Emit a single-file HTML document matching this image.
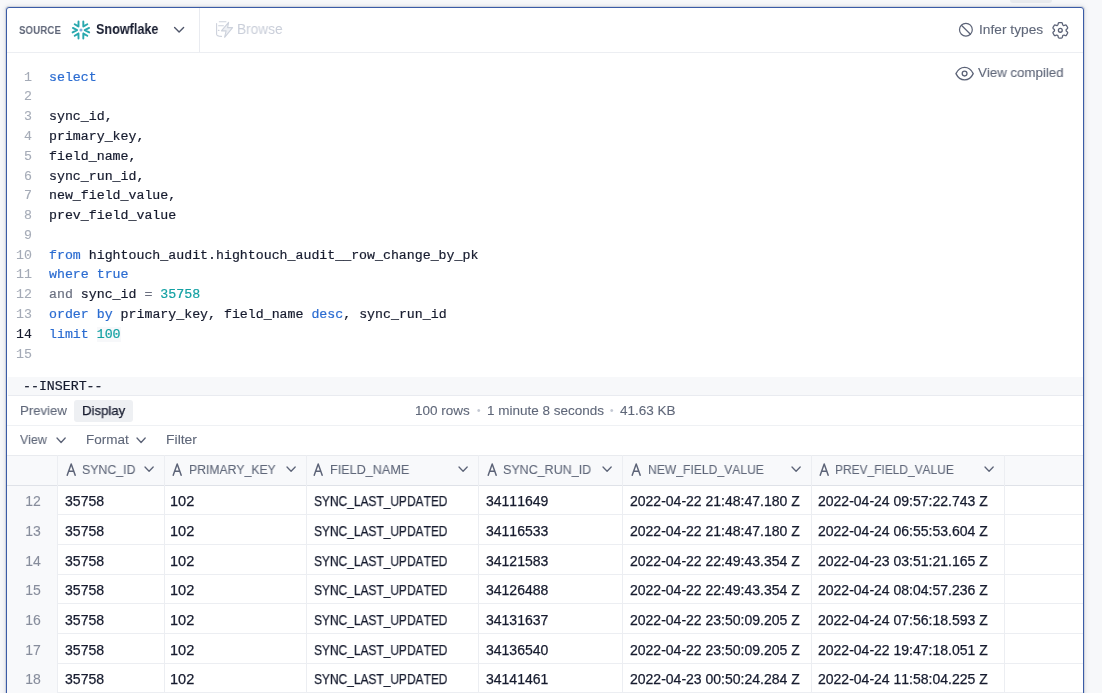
<!DOCTYPE html>
<html><head><meta charset="utf-8">
<style>
*{box-sizing:border-box;margin:0;padding:0}
html,body{width:1102px;height:693px;overflow:hidden;background:#f7f8fa;font-family:"Liberation Sans",sans-serif}
.t{position:absolute;white-space:nowrap;will-change:transform;font-kerning:none;-webkit-text-stroke:0.1px currentColor}
.b{position:absolute}
svg.b{overflow:visible}
</style></head><body>
<div class="b" style="left:1010px;top:-3px;width:42px;height:5.5px;background:#e9ebef;border-radius:3px"></div>
<div class="b" style="left:6px;top:7px;width:1078px;height:720px;border:1px solid #3a5ba6;border-radius:3px;background:#fff;box-shadow:0 0 0 1px #d1d5dd,0 0 4px 1px rgba(160,166,180,0.3)"></div>
<div class="b" style="left:7px;top:52px;width:1076px;height:1px;background:#eceef2"></div>
<div class="b" style="left:199px;top:8px;width:1px;height:44px;background:#e9ebf0"></div>
<div class="t" style="left:18.8px;top:21.97px;font-size:11.5px;line-height:16.1px;color:#5f6678;font-weight:bold;font-family:'Liberation Sans',sans-serif;transform:scaleX(0.8350);transform-origin:0 0;letter-spacing:0.2px;-webkit-text-stroke:0">SOURCE</div>
<div class="t" style="left:95.9px;top:20.35px;font-size:14px;line-height:19.6px;color:#161b2e;font-weight:bold;font-family:'Liberation Sans',sans-serif;transform:scaleX(0.9000);transform-origin:0 0;-webkit-text-stroke:0">Snowflake</div>
<div class="t" style="left:236.6px;top:20.35px;font-size:14px;line-height:19.6px;color:#c9ced9;font-weight:normal;font-family:'Liberation Sans',sans-serif;transform:scaleX(0.9750);transform-origin:0 0;-webkit-text-stroke:0">Browse</div>
<div class="t" style="left:979px;top:20.67px;font-size:13.5px;line-height:18.9px;color:#5f6779;font-weight:normal;font-family:'Liberation Sans',sans-serif;transform:scaleX(1.0180);transform-origin:0 0;">Infer types</div>
<div class="t" style="left:978px;top:64.37px;font-size:13.5px;line-height:18.9px;color:#5f6779;font-weight:normal;font-family:'Liberation Sans',sans-serif;transform:scaleX(0.9830);transform-origin:0 0;">View compiled</div>
<div class="t" style="left:1.5px;width:30px;text-align:right;top:67.57px;font-size:13.26px;line-height:19.79px;color:#a5abb7;font-family:'Liberation Mono',monospace">1</div>
<div class="t" style="left:49px;top:67.57px;font-size:13.26px;line-height:19.79px;color:#161b2e;font-family:'Liberation Mono',monospace;-webkit-text-stroke:0.2px currentColor"><span style="color:#2b6cd1">select</span></div>
<div class="t" style="left:1.5px;width:30px;text-align:right;top:87.36px;font-size:13.26px;line-height:19.79px;color:#a5abb7;font-family:'Liberation Mono',monospace">2</div>
<div class="t" style="left:1.5px;width:30px;text-align:right;top:107.15px;font-size:13.26px;line-height:19.79px;color:#a5abb7;font-family:'Liberation Mono',monospace">3</div>
<div class="t" style="left:49px;top:107.15px;font-size:13.26px;line-height:19.79px;color:#161b2e;font-family:'Liberation Mono',monospace;-webkit-text-stroke:0.2px currentColor">sync_id,</div>
<div class="t" style="left:1.5px;width:30px;text-align:right;top:126.94px;font-size:13.26px;line-height:19.79px;color:#a5abb7;font-family:'Liberation Mono',monospace">4</div>
<div class="t" style="left:49px;top:126.94px;font-size:13.26px;line-height:19.79px;color:#161b2e;font-family:'Liberation Mono',monospace;-webkit-text-stroke:0.2px currentColor">primary_key,</div>
<div class="t" style="left:1.5px;width:30px;text-align:right;top:146.73px;font-size:13.26px;line-height:19.79px;color:#a5abb7;font-family:'Liberation Mono',monospace">5</div>
<div class="t" style="left:49px;top:146.73px;font-size:13.26px;line-height:19.79px;color:#161b2e;font-family:'Liberation Mono',monospace;-webkit-text-stroke:0.2px currentColor">field_name,</div>
<div class="t" style="left:1.5px;width:30px;text-align:right;top:166.52px;font-size:13.26px;line-height:19.79px;color:#a5abb7;font-family:'Liberation Mono',monospace">6</div>
<div class="t" style="left:49px;top:166.52px;font-size:13.26px;line-height:19.79px;color:#161b2e;font-family:'Liberation Mono',monospace;-webkit-text-stroke:0.2px currentColor">sync_run_id,</div>
<div class="t" style="left:1.5px;width:30px;text-align:right;top:186.31px;font-size:13.26px;line-height:19.79px;color:#a5abb7;font-family:'Liberation Mono',monospace">7</div>
<div class="t" style="left:49px;top:186.31px;font-size:13.26px;line-height:19.79px;color:#161b2e;font-family:'Liberation Mono',monospace;-webkit-text-stroke:0.2px currentColor">new_field_value,</div>
<div class="t" style="left:1.5px;width:30px;text-align:right;top:206.10px;font-size:13.26px;line-height:19.79px;color:#a5abb7;font-family:'Liberation Mono',monospace">8</div>
<div class="t" style="left:49px;top:206.10px;font-size:13.26px;line-height:19.79px;color:#161b2e;font-family:'Liberation Mono',monospace;-webkit-text-stroke:0.2px currentColor">prev_field_value</div>
<div class="t" style="left:1.5px;width:30px;text-align:right;top:225.89px;font-size:13.26px;line-height:19.79px;color:#a5abb7;font-family:'Liberation Mono',monospace">9</div>
<div class="t" style="left:1.5px;width:30px;text-align:right;top:245.68px;font-size:13.26px;line-height:19.79px;color:#a5abb7;font-family:'Liberation Mono',monospace">10</div>
<div class="t" style="left:49px;top:245.68px;font-size:13.26px;line-height:19.79px;color:#161b2e;font-family:'Liberation Mono',monospace;-webkit-text-stroke:0.2px currentColor"><span style="color:#2b6cd1">from</span> hightouch_audit.hightouch_audit__row_change_by_pk</div>
<div class="t" style="left:1.5px;width:30px;text-align:right;top:265.47px;font-size:13.26px;line-height:19.79px;color:#a5abb7;font-family:'Liberation Mono',monospace">11</div>
<div class="t" style="left:49px;top:265.47px;font-size:13.26px;line-height:19.79px;color:#161b2e;font-family:'Liberation Mono',monospace;-webkit-text-stroke:0.2px currentColor"><span style="color:#2b6cd1">where true</span></div>
<div class="t" style="left:1.5px;width:30px;text-align:right;top:285.26px;font-size:13.26px;line-height:19.79px;color:#a5abb7;font-family:'Liberation Mono',monospace">12</div>
<div class="t" style="left:49px;top:285.26px;font-size:13.26px;line-height:19.79px;color:#161b2e;font-family:'Liberation Mono',monospace;-webkit-text-stroke:0.2px currentColor"><span style="color:#6b7080">and</span> sync_id <span style="color:#6b7080">=</span> <span style="color:#14a1a3">35758</span></div>
<div class="t" style="left:1.5px;width:30px;text-align:right;top:305.05px;font-size:13.26px;line-height:19.79px;color:#a5abb7;font-family:'Liberation Mono',monospace">13</div>
<div class="t" style="left:49px;top:305.05px;font-size:13.26px;line-height:19.79px;color:#161b2e;font-family:'Liberation Mono',monospace;-webkit-text-stroke:0.2px currentColor"><span style="color:#2b6cd1">order by</span> primary_key, field_name <span style="color:#2b6cd1">desc</span>, sync_run_id</div>
<div class="t" style="left:1.5px;width:30px;text-align:right;top:324.84px;font-size:13.26px;line-height:19.79px;color:#161b2e;font-family:'Liberation Mono',monospace">14</div>
<div class="t" style="left:49px;top:324.84px;font-size:13.26px;line-height:19.79px;color:#161b2e;font-family:'Liberation Mono',monospace;-webkit-text-stroke:0.2px currentColor"><span style="color:#2b6cd1">limit</span> <span style="color:#14a1a3;background:#f7f8fa">100</span></div>
<div class="t" style="left:1.5px;width:30px;text-align:right;top:344.63px;font-size:13.26px;line-height:19.79px;color:#a5abb7;font-family:'Liberation Mono',monospace">15</div>
<div class="b" style="left:8px;top:377px;width:1075px;height:19px;background:#f7f8fa;border-bottom:1px solid #e9ebf0"></div>
<div class="t" style="left:23.3px;top:377.47px;font-size:13.26px;line-height:19.79px;color:#161b2e;font-family:'Liberation Mono',monospace;-webkit-text-stroke:0.2px currentColor">--INSERT--</div>
<div class="b" style="left:7px;top:425px;width:1076px;height:1px;background:#eff1f4"></div>
<div class="t" style="left:20px;top:401.87px;font-size:13.5px;line-height:18.9px;color:#5f6779;font-weight:normal;font-family:'Liberation Sans',sans-serif;transform:scaleX(0.9770);transform-origin:0 0;">Preview</div>
<div class="b" style="left:74px;top:400px;width:59px;height:21.7px;background:#eef0f3;border-radius:3px"></div>
<div class="t" style="left:82.2px;top:401.87px;font-size:13.5px;line-height:18.9px;color:#161b2e;font-weight:normal;font-family:'Liberation Sans',sans-serif;transform:scaleX(0.9770);transform-origin:0 0;-webkit-text-stroke:0.25px currentColor;">Display</div>
<div class="t" style="left:415.4px;top:402.17px;font-size:13.5px;line-height:18.9px;color:#5f6779;font-weight:normal;font-family:'Liberation Sans',sans-serif;">100 rows</div>
<div class="t" style="left:476.5px;top:404.04px;font-size:10px;line-height:14.0px;color:#c3c8d3;font-weight:normal;font-family:'Liberation Sans',sans-serif;">•</div>
<div class="t" style="left:487.4px;top:402.17px;font-size:13.5px;line-height:18.9px;color:#5f6779;font-weight:normal;font-family:'Liberation Sans',sans-serif;">1 minute 8 seconds</div>
<div class="t" style="left:609.5px;top:404.04px;font-size:10px;line-height:14.0px;color:#c3c8d3;font-weight:normal;font-family:'Liberation Sans',sans-serif;">•</div>
<div class="t" style="left:619.8px;top:402.17px;font-size:13.5px;line-height:18.9px;color:#5f6779;font-weight:normal;font-family:'Liberation Sans',sans-serif;">41.63 KB</div>
<div class="t" style="left:20px;top:431.17px;font-size:13.5px;line-height:18.9px;color:#5f6779;font-weight:normal;font-family:'Liberation Sans',sans-serif;transform:scaleX(0.9150);transform-origin:0 0;">View</div>
<svg class="b" style="left:56.4px;top:436.9px" width="10.2" height="6.5" viewBox="-1 -1 10.2 6.5"><path d="M0 0L4.1 4.5L8.2 0" fill="none" stroke="#5c6377" stroke-width="1.3" stroke-linecap="round" stroke-linejoin="round"/></svg>
<div class="t" style="left:86px;top:431.17px;font-size:13.5px;line-height:18.9px;color:#5f6779;font-weight:normal;font-family:'Liberation Sans',sans-serif;">Format</div>
<svg class="b" style="left:136.1px;top:436.9px" width="10.2" height="6.5" viewBox="-1 -1 10.2 6.5"><path d="M0 0L4.1 4.5L8.2 0" fill="none" stroke="#5c6377" stroke-width="1.3" stroke-linecap="round" stroke-linejoin="round"/></svg>
<div class="t" style="left:166px;top:431.17px;font-size:13.5px;line-height:18.9px;color:#5f6779;font-weight:normal;font-family:'Liberation Sans',sans-serif;transform:scaleX(1.0340);transform-origin:0 0;">Filter</div>
<div class="b" style="left:7px;top:455px;width:1076px;height:31px;background:#f8f9fb;border-top:1px solid #e9ebef;border-bottom:1px solid #dfe2e8"></div>
<div class="b" style="left:7px;top:514px;width:1076px;height:1px;background:#eceef2"></div>
<div class="b" style="left:7px;top:544px;width:1076px;height:1px;background:#eceef2"></div>
<div class="b" style="left:7px;top:574px;width:1076px;height:1px;background:#eceef2"></div>
<div class="b" style="left:7px;top:603px;width:1076px;height:1px;background:#eceef2"></div>
<div class="b" style="left:7px;top:633px;width:1076px;height:1px;background:#eceef2"></div>
<div class="b" style="left:7px;top:663px;width:1076px;height:1px;background:#eceef2"></div>
<div class="b" style="left:7px;top:692px;width:1076px;height:1px;background:#eceef2"></div>
<div class="b" style="left:7px;top:486px;width:50px;height:300px;background:#f8f9fb"></div>
<div class="b" style="left:57px;top:455px;width:1px;height:300px;background:#eceef2"></div>
<div class="b" style="left:164px;top:455px;width:1px;height:300px;background:#eceef2"></div>
<div class="b" style="left:306px;top:455px;width:1px;height:300px;background:#eceef2"></div>
<div class="b" style="left:478px;top:455px;width:1px;height:300px;background:#eceef2"></div>
<div class="b" style="left:622px;top:455px;width:1px;height:300px;background:#eceef2"></div>
<div class="b" style="left:811px;top:455px;width:1px;height:300px;background:#eceef2"></div>
<div class="b" style="left:1004px;top:455px;width:1px;height:300px;background:#eceef2"></div>
<svg class="b" style="left:66.3px;top:463px" width="11" height="13" viewBox="0 0 11 13"><path d="M1.2 12.2L5.2 0.9L9.2 12.2M2.5 8.3H7.9" fill="none" stroke="#5c6377" stroke-width="1.45" stroke-linecap="round" stroke-linejoin="round"/></svg>
<div class="t" style="left:81.8px;top:460.80px;font-size:13px;line-height:18.2px;color:#5f6779;font-weight:normal;font-family:'Liberation Sans',sans-serif;transform:scaleX(0.9490);transform-origin:0 0;">SYNC_ID</div>
<svg class="b" style="left:144.4px;top:466.2px" width="10.2" height="6.3" viewBox="-1 -1 10.2 6.3"><path d="M0 0L4.1 4.3L8.2 0" fill="none" stroke="#5c6377" stroke-width="1.3" stroke-linecap="round" stroke-linejoin="round"/></svg>
<svg class="b" style="left:172.0px;top:463px" width="11" height="13" viewBox="0 0 11 13"><path d="M1.2 12.2L5.2 0.9L9.2 12.2M2.5 8.3H7.9" fill="none" stroke="#5c6377" stroke-width="1.45" stroke-linecap="round" stroke-linejoin="round"/></svg>
<div class="t" style="left:188.79999999999998px;top:460.80px;font-size:13px;line-height:18.2px;color:#5f6779;font-weight:normal;font-family:'Liberation Sans',sans-serif;transform:scaleX(0.9375);transform-origin:0 0;">PRIMARY_KEY</div>
<svg class="b" style="left:286.4px;top:466.2px" width="10.2" height="6.3" viewBox="-1 -1 10.2 6.3"><path d="M0 0L4.1 4.3L8.2 0" fill="none" stroke="#5c6377" stroke-width="1.3" stroke-linecap="round" stroke-linejoin="round"/></svg>
<svg class="b" style="left:313.4px;top:463px" width="11" height="13" viewBox="0 0 11 13"><path d="M1.2 12.2L5.2 0.9L9.2 12.2M2.5 8.3H7.9" fill="none" stroke="#5c6377" stroke-width="1.45" stroke-linecap="round" stroke-linejoin="round"/></svg>
<div class="t" style="left:330.0px;top:460.80px;font-size:13px;line-height:18.2px;color:#5f6779;font-weight:normal;font-family:'Liberation Sans',sans-serif;transform:scaleX(0.9702);transform-origin:0 0;">FIELD_NAME</div>
<svg class="b" style="left:458.4px;top:466.2px" width="10.2" height="6.3" viewBox="-1 -1 10.2 6.3"><path d="M0 0L4.1 4.3L8.2 0" fill="none" stroke="#5c6377" stroke-width="1.3" stroke-linecap="round" stroke-linejoin="round"/></svg>
<svg class="b" style="left:486.8px;top:463px" width="11" height="13" viewBox="0 0 11 13"><path d="M1.2 12.2L5.2 0.9L9.2 12.2M2.5 8.3H7.9" fill="none" stroke="#5c6377" stroke-width="1.45" stroke-linecap="round" stroke-linejoin="round"/></svg>
<div class="t" style="left:502.70000000000005px;top:460.80px;font-size:13px;line-height:18.2px;color:#5f6779;font-weight:normal;font-family:'Liberation Sans',sans-serif;transform:scaleX(0.9615);transform-origin:0 0;">SYNC_RUN_ID</div>
<svg class="b" style="left:602.4px;top:466.2px" width="10.2" height="6.3" viewBox="-1 -1 10.2 6.3"><path d="M0 0L4.1 4.3L8.2 0" fill="none" stroke="#5c6377" stroke-width="1.3" stroke-linecap="round" stroke-linejoin="round"/></svg>
<svg class="b" style="left:630.5px;top:463px" width="11" height="13" viewBox="0 0 11 13"><path d="M1.2 12.2L5.2 0.9L9.2 12.2M2.5 8.3H7.9" fill="none" stroke="#5c6377" stroke-width="1.45" stroke-linecap="round" stroke-linejoin="round"/></svg>
<div class="t" style="left:647.6px;top:460.80px;font-size:13px;line-height:18.2px;color:#5f6779;font-weight:normal;font-family:'Liberation Sans',sans-serif;transform:scaleX(0.9327);transform-origin:0 0;">NEW_FIELD_VALUE</div>
<svg class="b" style="left:791.4px;top:466.2px" width="10.2" height="6.3" viewBox="-1 -1 10.2 6.3"><path d="M0 0L4.1 4.3L8.2 0" fill="none" stroke="#5c6377" stroke-width="1.3" stroke-linecap="round" stroke-linejoin="round"/></svg>
<svg class="b" style="left:819.2px;top:463px" width="11" height="13" viewBox="0 0 11 13"><path d="M1.2 12.2L5.2 0.9L9.2 12.2M2.5 8.3H7.9" fill="none" stroke="#5c6377" stroke-width="1.45" stroke-linecap="round" stroke-linejoin="round"/></svg>
<div class="t" style="left:835.4px;top:460.80px;font-size:13px;line-height:18.2px;color:#5f6779;font-weight:normal;font-family:'Liberation Sans',sans-serif;transform:scaleX(0.9183);transform-origin:0 0;">PREV_FIELD_VALUE</div>
<svg class="b" style="left:984.4px;top:466.2px" width="10.2" height="6.3" viewBox="-1 -1 10.2 6.3"><path d="M0 0L4.1 4.3L8.2 0" fill="none" stroke="#5c6377" stroke-width="1.3" stroke-linecap="round" stroke-linejoin="round"/></svg>
<div class="t" style="left:7.5px;width:50px;text-align:center;top:492.35px;font-size:14px;line-height:19.6px;color:#878d9c">12</div>
<div class="t" style="left:65px;top:492.35px;font-size:14px;line-height:19.6px;color:#161b2e;font-weight:normal;font-family:'Liberation Sans',sans-serif;transform:scaleX(1.0060);transform-origin:0 0;-webkit-text-stroke:0.25px currentColor;">35758</div>
<div class="t" style="left:170.3px;top:492.35px;font-size:14px;line-height:19.6px;color:#161b2e;font-weight:normal;font-family:'Liberation Sans',sans-serif;transform:scaleX(1.0400);transform-origin:0 0;-webkit-text-stroke:0.25px currentColor;">102</div>
<div class="t" style="left:313.9px;top:492.35px;font-size:14px;line-height:19.6px;color:#161b2e;font-weight:normal;font-family:'Liberation Sans',sans-serif;transform:scaleX(0.8530);transform-origin:0 0;-webkit-text-stroke:0.25px currentColor;">SYNC_LAST_UPDATED</div>
<div class="t" style="left:486.3px;top:492.35px;font-size:14px;line-height:19.6px;color:#161b2e;font-weight:normal;font-family:'Liberation Sans',sans-serif;-webkit-text-stroke:0.25px currentColor;">34111649</div>
<div class="t" style="left:630.2px;top:492.35px;font-size:14px;line-height:19.6px;color:#161b2e;font-weight:normal;font-family:'Liberation Sans',sans-serif;-webkit-text-stroke:0.25px currentColor;">2022-04-22 21:48:47.180 Z</div>
<div class="t" style="left:818.4px;top:492.35px;font-size:14px;line-height:19.6px;color:#161b2e;font-weight:normal;font-family:'Liberation Sans',sans-serif;-webkit-text-stroke:0.25px currentColor;">2022-04-24 09:57:22.743 Z</div>
<div class="t" style="left:7.5px;width:50px;text-align:center;top:522.00px;font-size:14px;line-height:19.6px;color:#878d9c">13</div>
<div class="t" style="left:65px;top:522.00px;font-size:14px;line-height:19.6px;color:#161b2e;font-weight:normal;font-family:'Liberation Sans',sans-serif;transform:scaleX(1.0060);transform-origin:0 0;-webkit-text-stroke:0.25px currentColor;">35758</div>
<div class="t" style="left:170.3px;top:522.00px;font-size:14px;line-height:19.6px;color:#161b2e;font-weight:normal;font-family:'Liberation Sans',sans-serif;transform:scaleX(1.0400);transform-origin:0 0;-webkit-text-stroke:0.25px currentColor;">102</div>
<div class="t" style="left:313.9px;top:522.00px;font-size:14px;line-height:19.6px;color:#161b2e;font-weight:normal;font-family:'Liberation Sans',sans-serif;transform:scaleX(0.8530);transform-origin:0 0;-webkit-text-stroke:0.25px currentColor;">SYNC_LAST_UPDATED</div>
<div class="t" style="left:486.3px;top:522.00px;font-size:14px;line-height:19.6px;color:#161b2e;font-weight:normal;font-family:'Liberation Sans',sans-serif;-webkit-text-stroke:0.25px currentColor;">34116533</div>
<div class="t" style="left:630.2px;top:522.00px;font-size:14px;line-height:19.6px;color:#161b2e;font-weight:normal;font-family:'Liberation Sans',sans-serif;-webkit-text-stroke:0.25px currentColor;">2022-04-22 21:48:47.180 Z</div>
<div class="t" style="left:818.4px;top:522.00px;font-size:14px;line-height:19.6px;color:#161b2e;font-weight:normal;font-family:'Liberation Sans',sans-serif;-webkit-text-stroke:0.25px currentColor;">2022-04-24 06:55:53.604 Z</div>
<div class="t" style="left:7.5px;width:50px;text-align:center;top:551.65px;font-size:14px;line-height:19.6px;color:#878d9c">14</div>
<div class="t" style="left:65px;top:551.65px;font-size:14px;line-height:19.6px;color:#161b2e;font-weight:normal;font-family:'Liberation Sans',sans-serif;transform:scaleX(1.0060);transform-origin:0 0;-webkit-text-stroke:0.25px currentColor;">35758</div>
<div class="t" style="left:170.3px;top:551.65px;font-size:14px;line-height:19.6px;color:#161b2e;font-weight:normal;font-family:'Liberation Sans',sans-serif;transform:scaleX(1.0400);transform-origin:0 0;-webkit-text-stroke:0.25px currentColor;">102</div>
<div class="t" style="left:313.9px;top:551.65px;font-size:14px;line-height:19.6px;color:#161b2e;font-weight:normal;font-family:'Liberation Sans',sans-serif;transform:scaleX(0.8530);transform-origin:0 0;-webkit-text-stroke:0.25px currentColor;">SYNC_LAST_UPDATED</div>
<div class="t" style="left:486.3px;top:551.65px;font-size:14px;line-height:19.6px;color:#161b2e;font-weight:normal;font-family:'Liberation Sans',sans-serif;-webkit-text-stroke:0.25px currentColor;">34121583</div>
<div class="t" style="left:630.2px;top:551.65px;font-size:14px;line-height:19.6px;color:#161b2e;font-weight:normal;font-family:'Liberation Sans',sans-serif;-webkit-text-stroke:0.25px currentColor;">2022-04-22 22:49:43.354 Z</div>
<div class="t" style="left:818.4px;top:551.65px;font-size:14px;line-height:19.6px;color:#161b2e;font-weight:normal;font-family:'Liberation Sans',sans-serif;-webkit-text-stroke:0.25px currentColor;">2022-04-23 03:51:21.165 Z</div>
<div class="t" style="left:7.5px;width:50px;text-align:center;top:581.30px;font-size:14px;line-height:19.6px;color:#878d9c">15</div>
<div class="t" style="left:65px;top:581.30px;font-size:14px;line-height:19.6px;color:#161b2e;font-weight:normal;font-family:'Liberation Sans',sans-serif;transform:scaleX(1.0060);transform-origin:0 0;-webkit-text-stroke:0.25px currentColor;">35758</div>
<div class="t" style="left:170.3px;top:581.30px;font-size:14px;line-height:19.6px;color:#161b2e;font-weight:normal;font-family:'Liberation Sans',sans-serif;transform:scaleX(1.0400);transform-origin:0 0;-webkit-text-stroke:0.25px currentColor;">102</div>
<div class="t" style="left:313.9px;top:581.30px;font-size:14px;line-height:19.6px;color:#161b2e;font-weight:normal;font-family:'Liberation Sans',sans-serif;transform:scaleX(0.8530);transform-origin:0 0;-webkit-text-stroke:0.25px currentColor;">SYNC_LAST_UPDATED</div>
<div class="t" style="left:486.3px;top:581.30px;font-size:14px;line-height:19.6px;color:#161b2e;font-weight:normal;font-family:'Liberation Sans',sans-serif;-webkit-text-stroke:0.25px currentColor;">34126488</div>
<div class="t" style="left:630.2px;top:581.30px;font-size:14px;line-height:19.6px;color:#161b2e;font-weight:normal;font-family:'Liberation Sans',sans-serif;-webkit-text-stroke:0.25px currentColor;">2022-04-22 22:49:43.354 Z</div>
<div class="t" style="left:818.4px;top:581.30px;font-size:14px;line-height:19.6px;color:#161b2e;font-weight:normal;font-family:'Liberation Sans',sans-serif;-webkit-text-stroke:0.25px currentColor;">2022-04-24 08:04:57.236 Z</div>
<div class="t" style="left:7.5px;width:50px;text-align:center;top:610.95px;font-size:14px;line-height:19.6px;color:#878d9c">16</div>
<div class="t" style="left:65px;top:610.95px;font-size:14px;line-height:19.6px;color:#161b2e;font-weight:normal;font-family:'Liberation Sans',sans-serif;transform:scaleX(1.0060);transform-origin:0 0;-webkit-text-stroke:0.25px currentColor;">35758</div>
<div class="t" style="left:170.3px;top:610.95px;font-size:14px;line-height:19.6px;color:#161b2e;font-weight:normal;font-family:'Liberation Sans',sans-serif;transform:scaleX(1.0400);transform-origin:0 0;-webkit-text-stroke:0.25px currentColor;">102</div>
<div class="t" style="left:313.9px;top:610.95px;font-size:14px;line-height:19.6px;color:#161b2e;font-weight:normal;font-family:'Liberation Sans',sans-serif;transform:scaleX(0.8530);transform-origin:0 0;-webkit-text-stroke:0.25px currentColor;">SYNC_LAST_UPDATED</div>
<div class="t" style="left:486.3px;top:610.95px;font-size:14px;line-height:19.6px;color:#161b2e;font-weight:normal;font-family:'Liberation Sans',sans-serif;-webkit-text-stroke:0.25px currentColor;">34131637</div>
<div class="t" style="left:630.2px;top:610.95px;font-size:14px;line-height:19.6px;color:#161b2e;font-weight:normal;font-family:'Liberation Sans',sans-serif;-webkit-text-stroke:0.25px currentColor;">2022-04-22 23:50:09.205 Z</div>
<div class="t" style="left:818.4px;top:610.95px;font-size:14px;line-height:19.6px;color:#161b2e;font-weight:normal;font-family:'Liberation Sans',sans-serif;-webkit-text-stroke:0.25px currentColor;">2022-04-24 07:56:18.593 Z</div>
<div class="t" style="left:7.5px;width:50px;text-align:center;top:640.60px;font-size:14px;line-height:19.6px;color:#878d9c">17</div>
<div class="t" style="left:65px;top:640.60px;font-size:14px;line-height:19.6px;color:#161b2e;font-weight:normal;font-family:'Liberation Sans',sans-serif;transform:scaleX(1.0060);transform-origin:0 0;-webkit-text-stroke:0.25px currentColor;">35758</div>
<div class="t" style="left:170.3px;top:640.60px;font-size:14px;line-height:19.6px;color:#161b2e;font-weight:normal;font-family:'Liberation Sans',sans-serif;transform:scaleX(1.0400);transform-origin:0 0;-webkit-text-stroke:0.25px currentColor;">102</div>
<div class="t" style="left:313.9px;top:640.60px;font-size:14px;line-height:19.6px;color:#161b2e;font-weight:normal;font-family:'Liberation Sans',sans-serif;transform:scaleX(0.8530);transform-origin:0 0;-webkit-text-stroke:0.25px currentColor;">SYNC_LAST_UPDATED</div>
<div class="t" style="left:486.3px;top:640.60px;font-size:14px;line-height:19.6px;color:#161b2e;font-weight:normal;font-family:'Liberation Sans',sans-serif;-webkit-text-stroke:0.25px currentColor;">34136540</div>
<div class="t" style="left:630.2px;top:640.60px;font-size:14px;line-height:19.6px;color:#161b2e;font-weight:normal;font-family:'Liberation Sans',sans-serif;-webkit-text-stroke:0.25px currentColor;">2022-04-22 23:50:09.205 Z</div>
<div class="t" style="left:818.4px;top:640.60px;font-size:14px;line-height:19.6px;color:#161b2e;font-weight:normal;font-family:'Liberation Sans',sans-serif;-webkit-text-stroke:0.25px currentColor;">2022-04-22 19:47:18.051 Z</div>
<div class="t" style="left:7.5px;width:50px;text-align:center;top:670.25px;font-size:14px;line-height:19.6px;color:#878d9c">18</div>
<div class="t" style="left:65px;top:670.25px;font-size:14px;line-height:19.6px;color:#161b2e;font-weight:normal;font-family:'Liberation Sans',sans-serif;transform:scaleX(1.0060);transform-origin:0 0;-webkit-text-stroke:0.25px currentColor;">35758</div>
<div class="t" style="left:170.3px;top:670.25px;font-size:14px;line-height:19.6px;color:#161b2e;font-weight:normal;font-family:'Liberation Sans',sans-serif;transform:scaleX(1.0400);transform-origin:0 0;-webkit-text-stroke:0.25px currentColor;">102</div>
<div class="t" style="left:313.9px;top:670.25px;font-size:14px;line-height:19.6px;color:#161b2e;font-weight:normal;font-family:'Liberation Sans',sans-serif;transform:scaleX(0.8530);transform-origin:0 0;-webkit-text-stroke:0.25px currentColor;">SYNC_LAST_UPDATED</div>
<div class="t" style="left:486.3px;top:670.25px;font-size:14px;line-height:19.6px;color:#161b2e;font-weight:normal;font-family:'Liberation Sans',sans-serif;-webkit-text-stroke:0.25px currentColor;">34141461</div>
<div class="t" style="left:630.2px;top:670.25px;font-size:14px;line-height:19.6px;color:#161b2e;font-weight:normal;font-family:'Liberation Sans',sans-serif;-webkit-text-stroke:0.25px currentColor;">2022-04-23 00:50:24.284 Z</div>
<div class="t" style="left:818.4px;top:670.25px;font-size:14px;line-height:19.6px;color:#161b2e;font-weight:normal;font-family:'Liberation Sans',sans-serif;-webkit-text-stroke:0.25px currentColor;">2022-04-24 11:58:04.225 Z</div>
<svg class="b" style="left:0px;top:0px;pointer-events:none" width="1102" height="60" viewBox="0 0 1102 60"><path d="M78.5 21.4V26.6M74.7 24.2L78.3 26.4" fill="none" stroke="#29a8ae" stroke-width="1.9" stroke-linecap="round" stroke-linejoin="round"/><path d="M83.3 21.4V26.6M87.3 24.2L83.5 26.4" fill="none" stroke="#29a8ae" stroke-width="1.9" stroke-linecap="round" stroke-linejoin="round"/><path d="M72.9 27.9L77.1 30.1L72.6 32.4" fill="none" stroke="#29a8ae" stroke-width="1.9" stroke-linecap="round" stroke-linejoin="round"/><path d="M89.1 27.9L84.7 30.1L89.2 32.4" fill="none" stroke="#29a8ae" stroke-width="1.9" stroke-linecap="round" stroke-linejoin="round"/><path d="M78.5 33.4V38.6M74.7 35.8L78.3 33.6" fill="none" stroke="#29a8ae" stroke-width="1.9" stroke-linecap="round" stroke-linejoin="round"/><path d="M83.3 33.4V38.6M87.3 35.8L83.5 33.6" fill="none" stroke="#29a8ae" stroke-width="1.9" stroke-linecap="round" stroke-linejoin="round"/><circle cx="81" cy="30" r="1.5" fill="#7fb0dd"/></svg>
<svg class="b" style="left:0px;top:0px;" width="1102" height="60" viewBox="0 0 1102 60"><path d="M174.6 27.6L179.1 32.1L183.6 27.6" fill="none" stroke="#50576b" stroke-width="1.4" stroke-linecap="round" stroke-linejoin="round"/></svg>
<svg class="b" style="left:0px;top:0px;" width="1102" height="60" viewBox="0 0 1102 60"><g fill="none" stroke="#cdd2dc" stroke-width="1.1" stroke-linecap="round" stroke-linejoin="round"><path d="M219.3 21.8H226M216.6 23.6V34.3Q216.6 36.3 221.5 36.4M218.6 25.7H223.4M218.4 30.4H219"/><path d="M228.6 22.4L221.4 30.9H226.1L224.6 37.3L232.6 27.6H227.6Z" fill="#eef0f4"/></g></svg>
<svg class="b" style="left:0px;top:0px;" width="1102" height="60" viewBox="0 0 1102 60"><g fill="none" stroke="#5c6377" stroke-width="1.2" stroke-linecap="round"><circle cx="965.9" cy="29.7" r="6.4"/><path d="M961.4 25.3L970.4 34.2"/></g></svg>
<svg class="b" style="left:1050.18px;top:19.78px;" width="20.64" height="20.64" viewBox="0 0 24 24"><g fill="none" stroke="#5c6377" stroke-width="1.5" stroke-linecap="round" stroke-linejoin="round"><path d="M9.594 3.94c.09-.542.56-.94 1.11-.94h2.593c.55 0 1.02.398 1.11.94l.213 1.281c.063.374.313.686.645.87.074.04.147.083.22.127.325.196.72.257 1.075.124l1.217-.456a1.125 1.125 0 0 1 1.37.49l1.296 2.247a1.125 1.125 0 0 1-.26 1.431l-1.003.827c-.293.241-.438.613-.43.992a7.723 7.723 0 0 1 0 .255c-.008.378.137.75.43.991l1.004.827c.424.35.534.955.26 1.43l-1.298 2.247a1.125 1.125 0 0 1-1.369.491l-1.217-.456c-.355-.133-.75-.072-1.076.124a6.47 6.47 0 0 1-.22.128c-.331.183-.581.495-.644.869l-.213 1.281c-.09.543-.56.94-1.11.94h-2.594c-.55 0-1.019-.398-1.11-.94l-.213-1.281c-.062-.374-.312-.686-.644-.87a6.52 6.52 0 0 1-.22-.127c-.325-.196-.72-.257-1.076-.124l-1.217.456a1.125 1.125 0 0 1-1.369-.49l-1.297-2.247a1.125 1.125 0 0 1 .26-1.431l1.004-.827c.292-.24.437-.613.43-.991a6.932 6.932 0 0 1 0-.255c.007-.38-.138-.751-.43-.992l-1.004-.827a1.125 1.125 0 0 1-.26-1.43l1.297-2.247a1.125 1.125 0 0 1 1.37-.491l1.216.456c.356.133.751.072 1.076-.124.072-.044.146-.086.22-.128.332-.183.582-.495.644-.869l.214-1.28Z"/><path d="M14.25 12a2.25 2.25 0 1 1-4.5 0 2.25 2.25 0 0 1 4.5 0Z"/></g></svg>
<svg class="b" style="left:955.4px;top:64.35px;" width="19.200000000000003" height="19.200000000000003" viewBox="0 0 24 24"><g fill="none" stroke="#5c6377" stroke-width="1.65" stroke-linecap="round" stroke-linejoin="round"><path d="M1.2 12C3.5 7.2 7.2 4.2 12 4.2S20.5 7.2 22.8 12C20.5 16.8 16.8 19.8 12 19.8S3.5 16.8 1.2 12Z"/><circle cx="12" cy="12" r="3"/></g></svg>
</body></html>
